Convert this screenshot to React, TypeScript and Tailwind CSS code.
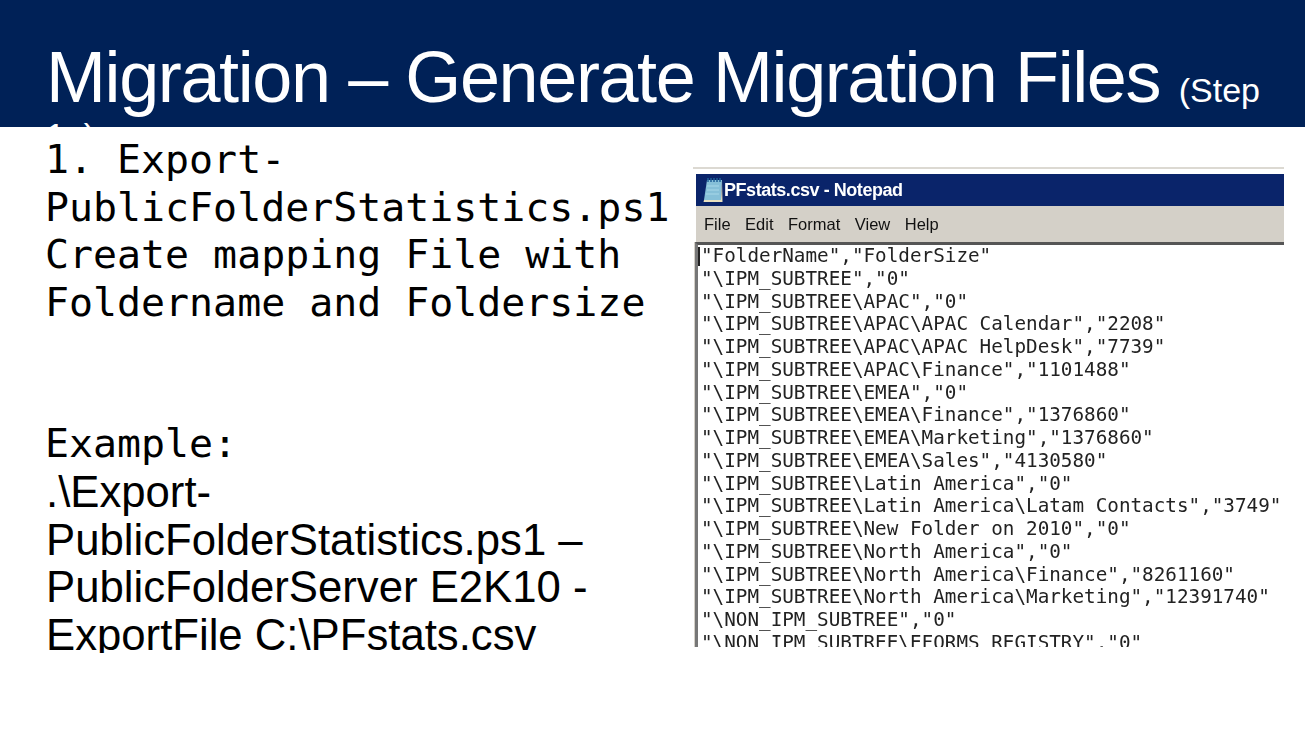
const rows = [
  '"FolderName","FolderSize"',
  '"\\IPM_SUBTREE","0"',
  '"\\IPM_SUBTREE\\APAC","0"',
  '"\\IPM_SUBTREE\\APAC\\APAC Calendar","2208"',
  '"\\IPM_SUBTREE\\APAC\\APAC HelpDesk","7739"',
  '"\\IPM_SUBTREE\\APAC\\Finance","1101488"',
  '"\\IPM_SUBTREE\\EMEA","0"',
  '"\\IPM_SUBTREE\\EMEA\\Finance","1376860"',
  '"\\IPM_SUBTREE\\EMEA\\Marketing","1376860"',
  '"\\IPM_SUBTREE\\EMEA\\Sales","4130580"',
  '"\\IPM_SUBTREE\\Latin America","0"',
  '"\\IPM_SUBTREE\\Latin America\\Latam Contacts","3749"',
  '"\\IPM_SUBTREE\\New Folder on 2010","0"',
  '"\\IPM_SUBTREE\\North America","0"',
  '"\\IPM_SUBTREE\\North America\\Finance","8261160"',
  '"\\IPM_SUBTREE\\North America\\Marketing","12391740"',
  '"\\NON_IPM_SUBTREE","0"',
  '"\\NON_IPM_SUBTREE\\EFORMS REGISTRY","0"',
];

function NotepadIcon() {
  return (
    <svg width="24" height="28" viewBox="0 0 24 28" className="shrink-0">
      <path d="M6 4 H21 L20 24 H3 Z" fill="#86c0d8" />
      <path d="M21 4 L20 24 H3 L2.5 26 H21.5 Z" fill="#e8e0c0" />
      <path d="M7 2 V6 M10 2 V6 M13 2 V6 M16 2 V6 M19 2 V6" stroke="#1f5f96" strokeWidth="1.5" />
      <path d="M6 10 H18 M6 14 H18 M5 18 H18" stroke="#a8d8e8" strokeWidth="1" />
    </svg>
  );
}

export default function App() {
  return (
    <div className="w-[1305px] h-[734px] overflow-hidden bg-white font-['Liberation_Sans',sans-serif]">
      <header className="h-[127px] overflow-hidden bg-[#002157] pl-[46px] pt-[55px] text-white">
        <h1 className="w-[1230px] text-[72px] leading-[45px] tracking-[-1.4px]">
          Migration – Generate Migration Files <span className="text-[34px] leading-[0px] tracking-normal">(Step 1a)</span>
        </h1>
      </header>
      <main className="flex">
        <section className="w-[647px] h-[526px] shrink-0 pl-[46px] pt-[8px] text-black">
          <div className="h-[518px] w-[640px] overflow-hidden leading-[47.6px]">
            <div className="-ml-px pt-px font-['DejaVu_Sans_Mono',monospace] text-[39.9px]">
              <p>1. Export-PublicFolderStatistics.ps1</p>
              <p>Create mapping File with Foldername and Foldersize</p>
              <div className="h-[95px]" />
              <p className="-mt-px">Example:</p>
            </div>
            <p className="w-[560px] text-[43.7px]">.\Export-PublicFolderStatistics.ps1 –PublicFolderServer E2K10 -ExportFile C:\PFstats.csv</p>
          </div>
        </section>
        <figure className="ml-[46px] mt-[40px] flex h-[480px] w-[591px] flex-col overflow-hidden border-t-2 border-t-[#dcd9d2] blur-[0.4px]">
          <div className="flex h-[32px] mt-[5px] items-center bg-[#0a246a] ml-[3px] pl-[5px] text-white">
            <NotepadIcon />
            <span className="-ml-px text-[18px] font-bold tracking-[-0.45px]">PFstats.csv - Notepad</span>
          </div>
          <div className="flex h-[36px] items-center gap-[14.5px] bg-[#d4d0c8] ml-[3px] pl-[8px] text-[16.5px] text-[#111]">
            <span>File</span><span>Edit</span><span>Format</span><span>View</span><span>Help</span>
          </div>
          <div className="min-h-0 flex-1 ml-[1px] pl-[1px] bg-[#d4d0c8]">
            <div className="relative h-full overflow-hidden bg-white border-t-[3px] border-l-[3px] border-t-[#555] border-l-[#777] pl-[3px] font-['DejaVu_Sans_Mono',monospace] text-[19.3px] leading-[22.76px] text-[#222]">
              <span className="absolute left-[0px] top-[2px] h-[19px] w-[2px] bg-[#222]" />
              {rows.map((r) => (
                <div key={r} className="whitespace-pre">{r}</div>
              ))}
            </div>
          </div>
        </figure>
      </main>
    </div>
  );
}
